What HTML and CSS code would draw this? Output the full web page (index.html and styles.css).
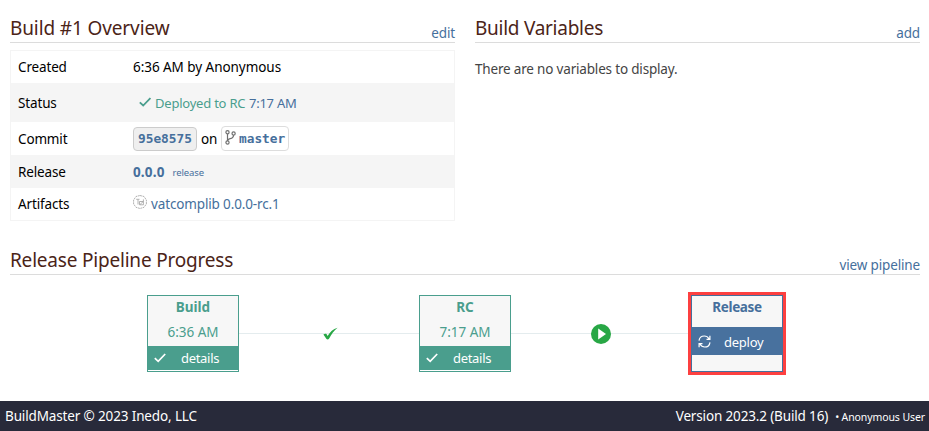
FILE: index.html
```html
<!DOCTYPE html>
<html lang="en">
<head>
<meta charset="utf-8">
<title>Build #1 Overview</title>
<link rel="stylesheet" href="styles.css">
</head>
<body>
<main>
  <div class="columns">
    <section class="overview">
      <header class="heading"><h2 class="h-overview">Build #1 Overview</h2><a class="edit">edit</a></header>
      <dl class="info">
        <div class="row created"><dt>Created</dt><dd><span class="by">6:36 AM by Anonymous</span></dd></div>
        <div class="row status"><dt>Status</dt><dd><svg class="tick" viewBox="0 0 12 10"><path d="M.8 5.300 4.200 8.500 11.400 1"/></svg><span class="deployed">Deployed to RC</span><a class="when">7:17 AM</a></dd></div>
        <div class="row commit"><dt>Commit</dt><dd><a class="chip hash">95e8575</a><span class="on">on</span><a class="chip branch"><svg class="fork" viewBox="0 0 11 15"><circle cx="2.5" cy="2.3" r="1.6"/><circle cx="2.5" cy="12.5" r="1.6"/><circle cx="8.6" cy="3.4" r="1.6"/><path d="M2.500 4v7M8.600 5c0 3-1.800 3.300-3.600 3.700C3.600 9 2.700 9.500 2.500 11"/></svg>master</a></dd></div>
        <div class="row release"><dt>Release</dt><dd><a class="number">0.0.0</a><a class="small">release</a></dd></div>
        <div class="row artifacts"><dt>Artifacts</dt><dd><svg class="package" viewBox="0 0 14 14"><path class="ring" d="M7 .5 11 1.500 13.400 5v4L11 12.300 7 13.500 3 12.300.6 9V5L3 1.500z"/><path d="M3.200 4.300h3.300M5 4.500v5M10.400 4.400v5.400H6.500V6.500h3.800M7 9.500l3-2.800"/></svg><a class="artifact">vatcomplib 0.0.0-rc.1</a></dd></div>
      </dl>
    </section>
    <section class="variables">
      <header class="heading"><h2 class="h-variables">Build Variables</h2><a class="add">add</a></header>
      <p><span class="none">There are no variables to display.</span></p>
    </section>
  </div>
  <section class="pipeline">
    <header class="heading"><h2 class="h-pipeline">Release Pipeline Progress</h2><a class="view">view pipeline</a></header>
    <div class="stages">
      <div class="stage done"><b class="n-build">Build</b><span class="time">6:36 AM</span><a class="action"><svg viewBox="0 0 12 10"><path d="M.8 5.200 4.200 8.400 11.200 1"/></svg><span class="details">details</span></a></div>
      <div class="link"><svg class="passed" viewBox="0 0 15 13"><path d="M.4 7.500C1.500 6.500 2.700 6.500 3.500 6.900L4.600 9C7 5 10 2 14.600.8 11 3.700 8.500 7 6 11.800c-.8.900-2 .7-2.500.1z"/></svg></div>
      <div class="stage done"><b class="n-rc">RC</b><span class="time">7:17 AM</span><a class="action"><svg viewBox="0 0 12 10"><path d="M.8 5.200 4.200 8.400 11.200 1"/></svg><span class="details">details</span></a></div>
      <div class="link"><svg class="play" viewBox="0 0 20 20"><circle cx="10" cy="10" r="10"/><path d="M7.200 4.500v11L15 10z"/></svg></div>
      <div class="stage next"><b class="n-release">Release</b><a class="action"><svg viewBox="0 0 13 13"><path d="M1 5.700C1.400 2.800 3.700 1 6.300 1c2 0 3.700 1 4.600 2.700M12 7.300C11.600 10.200 9.300 12 6.700 12c-2 0-3.700-1-4.600-2.700M11.900.8v3.500H8.500M1.100 12.200V8.700h3.400"/></svg><span class="deploy">deploy</span></a></div>
    </div>
  </section>
</main>
<footer><span class="copy">BuildMaster © 2023 Inedo, LLC</span><span class="version">Version 2023.2 (Build 16)</span><span class="user">• Anonymous User</span></footer>
</body>
</html>
```
FILE: styles.css
```css
* { box-sizing: border-box; }
body { margin: 0; height: 431px; display: flex; flex-direction: column; background: #fff; color: #000; font: 13.5px/20px "Noto Sans", "Open Sans", sans-serif; white-space: nowrap; overflow: hidden; }
main { flex: 1; padding: 14px 9px 0 10px; }
h2, p, dl, dd { margin: 0; }
a { color: #466f9c; }
.columns { display: grid; grid-template-columns: 445px 445px; gap: 20px; height: 232px; }
.heading { display: flex; justify-content: space-between; align-items: flex-end; height: 29px; border-bottom: 1px solid #dcdcdc; }
.heading h2 { font-size: 19px; line-height: 28px; font-weight: 400; color: #4b2418; }
.heading .h-overview { letter-spacing: -.12px; }
.heading .h-variables { letter-spacing: -.27px; }
.heading .h-pipeline { letter-spacing: -.2px; }
.heading a { line-height: 17px; letter-spacing: -.15px; }
.info { margin-top: 7px; border: 1px solid #f4f4f4; }
.row { display: flex; align-items: center; height: 33px; padding-left: 7px; }
.row:nth-child(even) { background: #f5f5f5; }
.row dt { width: 115px; letter-spacing: -.15px; }
.row dd { display: flex; align-items: center; }
.by { letter-spacing: -.05px; }
.created, .artifacts { height: 32px; }
.status { height: 39px; }
svg { fill: none; stroke: currentColor; flex: none; }
.tick { width: 12px; height: 10px; margin: 0 4px 2px 6px; color: #4a9e8d; stroke-width: 1.8; }
.deployed { width: 94px; color: #4a9e8d; font-size: 13px; letter-spacing: -.22px; }
.when { font-size: 13px; letter-spacing: -.25px; }
.status span, .status .when { padding-top: 1px; }
.chip { display: flex; align-items: center; height: 24px; border: 1px solid #ccc; border-radius: 4px; font: bold 12.8px/22px "DejaVu Sans Mono", monospace; }
.hash { width: 64px; padding-left: 4px; background: #efefef; }
.on { margin: 0 4px; width: 16px; letter-spacing: -.15px; }
.branch { width: 68px; height: 25px; padding-left: 3px; border-color: #ddd; }
.fork { width: 11px; height: 15px; margin: 0 3px 2px 0; color: #707070; stroke-width: 1.2; }
.number { font-weight: 700; letter-spacing: .15px; margin-right: 8px; }
.small { font-size: 9.5px; letter-spacing: -.1px; padding-top: 2px; }
.package { width: 14px; height: 14px; margin: 0 4px 4px 0; color: #999; stroke-width: .75; }
.package .ring { stroke-dasharray: 2 .6; }
.artifact { letter-spacing: -.14px; }
.variables p { padding-top: 16px; color: #444; }
.none { letter-spacing: -.18px; }
.stages { display: flex; padding: 20px 0 0 137px; }
.stage { display: flex; flex-direction: column; width: 92px; height: 77px; border: 1px solid; background: #f7f7f7; text-align: center; }
.stage b { height: 25px; line-height: 22px; }
.done { color: #4a9e8d; box-shadow: inset 0 -1px #fff; }
.time { height: 25px; line-height: 22px; }
.action { display: flex; align-items: center; height: 24px; padding-left: 6px; color: #fff; background: #4a9e8d; }
.action svg { width: 12px; height: 10px; margin-right: 15px; stroke-width: 1.7; }
.details { font-size: 13px; letter-spacing: -.3px; }
.link { display: flex; align-items: center; justify-content: center; width: 180px; height: 77px; background: linear-gradient(#e4ecee, #e4ecee) 0 38px / 100% 1px no-repeat; }
.link svg { fill: #28a745; stroke: none; }
.passed { width: 15px; height: 13px; margin: 0 0 1px 2px; }
.play { width: 20px; height: 20px; }
.play path { fill: #fff; }
.next { color: #466f9c; outline: 3px solid #fd4040; }
.next b { height: 31px; letter-spacing: -.35px; }
.next .action { height: 28px; background: #48719e; }
.next .action svg { width: 13px; height: 13px; margin-right: 13px; stroke-width: 1.2; }
.deploy { font-size: 13px; letter-spacing: -.25px; padding-top: 1px; }
footer { display: flex; align-items: center; height: 30px; padding: 0 4px 0 5px; background: #282a3a; color: #fff; }
.copy { letter-spacing: -.14px; }
.version { margin-left: auto; letter-spacing: -.15px; }
.user { margin-left: 7px; font-size: 10.5px; letter-spacing: -.1px; padding-top: 2px; }
```
